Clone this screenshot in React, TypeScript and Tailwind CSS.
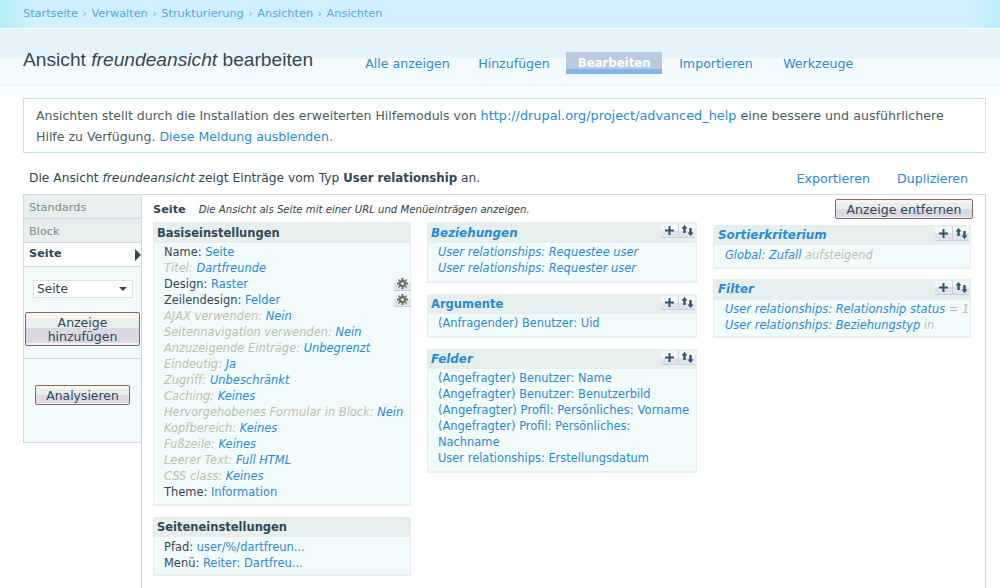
const F = "font-['DejaVu_Sans',sans-serif]";
const link = "text-[#2a8ad4]";
const toolBg = "bg-[linear-gradient(#f4f8f8_0%,#f4f8f8_50%,#dfe3ee_50%,#dfe3ee_100%)]";

function Plus() {
  return (
    <span className={`flex h-[14px] w-[17px] items-center justify-center border-b border-[#c5cfe6] ${toolBg}`}>
      <svg width="11" height="11" viewBox="0 0 11 11"><path d="M4.5 1h2v3.5H10v2H6.5V10h-2V6.5H1v-2h3.5z" fill="#2c5570" /></svg>
    </span>
  );
}
function Arrows() {
  return (
    <span className={`flex h-[14px] w-[17px] items-center justify-center border-b border-l border-[#c5cfe6] ${toolBg}`}>
      <svg width="13" height="11" viewBox="0 0 13 11"><path d="M3.5 0 6.5 3.5H4.7V8H2.3V3.5H0.5z" fill="#2c5570" /><path d="M9.5 11 6.5 7.5H8.3V3h2.4v4.5h1.8z" fill="#2c5570" /></svg>
    </span>
  );
}
function Gear() {
  return (
    <span className={`flex h-[14px] w-[17px] items-center justify-center border-b border-[#c5cfe6] ${toolBg}`}>
      <svg width="11" height="11" viewBox="0 0 11 11">
        <path d="M4.5 0h2v2l1.2.5L9.2 1l.9.9-1.5 1.5.4 1.1h2v2h-2l-.4 1.1 1.5 1.5-.9.9-1.5-1.5-1.2.5v2h-2v-2l-1.2-.5L1.8 10l-.9-.9 1.5-1.5L2 6.5H0v-2h2l.4-1.1L.9 1.9 1.8 1l1.5 1.5L4.5 2z" fill="#6b6a55" />
        <circle cx="5.5" cy="5.5" r="1.6" fill="#dfe3ee" />
      </svg>
    </span>
  );
}

function SectionHeader({ title, className, tools = true, tall }: { title: string; className: string; tools?: boolean; tall?: boolean }) {
  return (
    <div className={`flex items-start justify-between bg-[#e6efee] pl-[3px] ${tall ? "h-[21px]" : "h-[20px]"}`}>
      <span className={`font-bold leading-[21px] ${className}`}>{title}</span>
      {tools && (
        <span className="flex pr-[1px] pt-[2px]">
          <Plus />
          <Arrows />
        </span>
      )}
    </div>
  );
}

function Panel({ title, headClass, children, tall, body = "px-[10px] pb-[5px] pt-[1px]" }: { title: string; headClass: string; children: React.ReactNode; tall?: boolean; body?: string }) {
  return (
    <section className="border-x border-b-2 border-[#e8f0ef] bg-[#f2fbfb]">
      <SectionHeader title={title} className={headClass} tall={tall} />
      <div className={`text-[11.45px] leading-[16px] ${body}`}>{children}</div>
    </section>
  );
}

function Row({ label, value, faded, gear }: { label: string; value: string; faded?: boolean; gear?: boolean }) {
  return (
    <div className={`flex h-[16px] items-center justify-between whitespace-nowrap ${faded ? "italic" : ""}`}>
      <span>
        <span className={faded ? "text-[#b9bfae]" : "text-[#2f4757]"}>{label}: </span>
        <span className={link}>{value}</span>
      </span>
      {gear && <span className="-mr-[11px]"><Gear /></span>}
    </div>
  );
}

const striped = "bg-[linear-gradient(#fbf3e8_0%,#fbf3e8_18%,#e6efee_18%,#e6efee_48%,#dcd9e5_48%,#dcd9e5_94%,#f4f4f6_94%)]";

export default function App() {
  return (
    <div className={`${F} h-[588px] w-[1000px] overflow-hidden bg-white text-[#2f4757]`}>
      <header className="flex h-[28px] items-center bg-[linear-gradient(to_right,#b5eef6_0px,#d2effe_34px,#d2effe_970px,#bdeefc_1000px)] pl-[23px] text-[11.3px] text-[#56a5e0]">
        <span>Startseite</span><span className="mx-[4.5px] text-[#7ab0d0]">›</span>
        <span>Verwalten</span><span className="mx-[4.5px] text-[#7ab0d0]">›</span>
        <span>Strukturierung</span><span className="mx-[4.5px] text-[#7ab0d0]">›</span>
        <span>Ansichten</span><span className="mx-[4.5px] text-[#7ab0d0]">›</span>
        <span>Ansichten</span>
      </header>
      <div className="h-[1px] bg-white" />
      <div className="h-[57px] border-b border-[#e9eff2] bg-[linear-gradient(#e5f3fa_0%,#e5f3fa_51%,#f2fbfd_51%,#f2fbfd_100%)]">
        <div className="flex pl-[23px]">
          <h1 className="whitespace-nowrap pt-[19px] font-['Liberation_Sans',sans-serif] text-[19.2px] leading-[24px] text-[#33485a]">
            Ansicht <em>freundeansicht</em> bearbeiten
          </h1>
          <nav className={`ml-[52px] flex pt-[23px] text-[12.6px] leading-[24px] ${link}`}>
            <span className="w-[113px]">Alle anzeigen</span>
            <span className="w-[88px]">Hinzufügen</span>
            <span className="mr-[17px] h-[22px] w-[96px] border-b-[5px] border-[#83b5e4] bg-[#b8cbe2] text-center text-[11.7px] font-bold leading-[22px] text-white">Bearbeiten</span>
            <span className="w-[104px]">Importieren</span>
            <span>Werkzeuge</span>
          </nav>
        </div>
      </div>
      <div className="bg-[linear-gradient(#f7fcfe_0px,#f7fcfe_10px,#ffffff_10px)] pl-[23px] pt-[12px]">
        <div className="h-[55px] w-[963px] border border-[#bdeadb] bg-white px-[12px] pt-[6px] text-[12.52px] leading-[21px] text-[#4a5d5f]">
          <div className="whitespace-nowrap">Ansichten stellt durch die Installation des erweiterten Hilfemoduls von <span className={`text-[12.85px] ${link}`}>http://drupal.org/project/advanced_help</span> <span className="text-[12.66px]">eine bessere und ausführlichere</span></div>
          <div>Hilfe zu Verfügung. <span className={link}>Diese Meldung ausblenden.</span></div>
        </div>
      </div>
      <div className="flex h-[41px] w-[986px] items-center justify-between pl-[29px] pr-[18px] pt-[10px] text-[12.27px]">
        <span className="whitespace-nowrap">Die Ansicht <em>freundeansicht</em> zeigt Einträge vom Typ <strong className="text-[11.75px]">User relationship</strong> an.</span>
        <span className={`flex items-baseline gap-[27px] text-[12.7px] ${link}`}><span>Exportieren</span><span className="text-[12.55px]">Duplizieren</span></span>
      </div>
      <main className="ml-[23px] flex h-[400px] w-[963px] items-start border-r border-t border-[#d5d5e0]">
        <aside className="w-[118px] shrink-0 border-l border-[#d5d5e0] text-[11.3px]">
          <div className="h-[24px] border-b border-[#d5d5e0] bg-[#e6efee] pl-[5px] leading-[25px] text-[#7d8a85]">Standards</div>
          <div className="h-[24px] border-b border-[#d5d5e0] bg-[#e6efee] pl-[5px] leading-[25px] text-[#7d8a85]">Block</div>
          <div className="flex h-[24px] items-center justify-between border-b border-[#d5d5e0] bg-white pl-[5px] font-bold">
            <span>Seite</span>
            <svg width="6" height="12" viewBox="0 0 6 12"><path d="M0 0l6 6-6 6z" fill="#2f4757" /></svg>
          </div>
          <div className="h-[176px] border-b border-[#d5d5e0] bg-[#f2fbfb]">
            <div className="h-[92px] border-b border-[#d5d5e0] px-[1px] pt-[13px]">
              <div className="mx-[8px] flex h-[18px] w-[100px] items-center justify-between border border-[#dde3d5] bg-white pl-[3px] pr-[5px] text-[12.2px]">
                <span>Seite</span>
                <svg width="8" height="4" viewBox="0 0 8 4"><path d="M0 0h8L4 4z" fill="#34495a" /></svg>
              </div>
              <button className={`mt-[14px] block h-[34px] w-[115px] rounded-[2px] border border-[#7d6a70] ${striped} pt-[1px] text-center text-[12.5px] leading-[14px]`}>Anzeige<br />hinzufügen</button>
            </div>
            <button className={`ml-[11px] mt-[26px] block h-[20px] w-[95px] rounded-[2px] border border-[#7d6a70] ${striped} text-center text-[12.4px] leading-[17px]`}>Analysieren</button>
          </div>
        </aside>
        <div className="h-full min-w-0 flex-1 border-l border-[#d5d5e0] pl-[11px] pr-[14px]">
          <div className="flex h-[27px] items-start justify-between">
            <div className="flex items-baseline gap-[13px] whitespace-nowrap pt-[7px]">
              <strong className="text-[11.3px]">Seite</strong>
              <em className="text-[10.15px] text-[#33424d]">Die Ansicht als Seite mit einer URL und Menüeinträgen anzeigen.</em>
            </div>
            <button className={`-mr-[2px] mt-[4px] h-[20px] w-[138px] shrink-0 rounded-[2px] border border-[#7d6a70] ${striped} text-[12.5px] leading-[17px]`}>Anzeige entfernen</button>
          </div>
          <div className="flex items-start gap-[16px]">
            <div className="flex w-[258px] shrink-0 flex-col gap-[11px]">
              <section className="border-x border-b-2 border-[#e8f0ef] bg-[#f2fbfb]">
                <SectionHeader title="Basiseinstellungen" className="text-[11.5px] leading-[23px] text-[#2f4757]" tools={false} tall />
                <div className="px-[10px] pb-[4px] pt-[1px] text-[11.45px] leading-[16px]">
                  <Row label="Name" value="Seite" />
                  <Row label="Titel" value="Dartfreunde" faded />
                  <Row label="Design" value="Raster" gear />
                  <Row label="Zeilendesign" value="Felder" gear />
                  <Row label="AJAX verwenden" value="Nein" faded />
                  <Row label="Seitennavigation verwenden" value="Nein" faded />
                  <Row label="Anzuzeigende Einträge" value="Unbegrenzt" faded />
                  <Row label="Eindeutig" value="Ja" faded />
                  <Row label="Zugriff" value="Unbeschränkt" faded />
                  <Row label="Caching" value="Keines" faded />
                  <Row label="Hervorgehobenes Formular in Block" value="Nein" faded />
                  <Row label="Kopfbereich" value="Keines" faded />
                  <Row label="Fußzeile" value="Keines" faded />
                  <Row label="Leerer Text" value="Full HTML" faded />
                  <Row label="CSS class" value="Keines" faded />
                  <Row label="Theme" value="Information" />
                </div>
              </section>
              <section className="border-x border-b-2 border-[#e8f0ef] bg-[#f2fbfb]">
                <SectionHeader title="Seiteneinstellungen" className="text-[11.5px] leading-[21px] text-[#2f4757]" tools={false} />
                <div className="px-[10px] pb-[3px] pt-[2px] text-[11.45px] leading-[16px]">
                  <Row label="Pfad" value="user/%/dartfreun..." />
                  <Row label="Menü" value="Reiter: Dartfreu..." />
                </div>
              </section>
            </div>
            <div className="flex w-[270px] shrink-0 flex-col gap-[11px]">
              <Panel title="Beziehungen" headClass={`text-[11.9px] leading-[22px] italic ${link}`} tall>
                <div className={`italic ${link}`}>User relationships: Requestee user</div>
                <div className={`italic ${link}`}>User relationships: Requester user</div>
              </Panel>
              <Panel title="Argumente" headClass={`text-[11.5px] ${link}`}>
                <div className={link}>(Anfragender) Benutzer: Uid</div>
              </Panel>
              <Panel title="Felder" headClass={`text-[11.9px] italic ${link}`}>
                <div className={link}>(Angefragter) Benutzer: Name</div>
                <div className={link}>(Angefragter) Benutzer: Benutzerbild</div>
                <div className={`whitespace-nowrap text-[11.65px] ${link}`}>(Angefragter) Profil: Persönliches: Vorname</div>
                <div className={link}>(Angefragter) Profil: Persönliches:<br />Nachname</div>
                <div className={link}>User relationships: Erstellungsdatum</div>
              </Panel>
            </div>
            <div className="flex w-[258px] shrink-0 flex-col gap-[10px] pt-[3px]">
              <Panel title="Sortierkriterium" headClass={`ml-[1px] text-[11.9px] italic ${link}`} body="pb-[4px] pl-[11px] pr-[10px] pt-[2px]">
                <div className="italic"><span className={link}>Global: Zufall</span> <span className="text-[#b9bfae]">aufsteigend</span></div>
              </Panel>
              <Panel title="Filter" headClass={`ml-[1px] text-[11.9px] italic ${link}`} tall body="pb-[3px] pl-[11px] pr-[10px] pt-[1px]">
                <div className="whitespace-nowrap italic"><span className={link}>User relationships: Relationship status</span> <span className="text-[#b9bfae]">= 1</span></div>
                <div className="whitespace-nowrap italic"><span className={link}>User relationships: Beziehungstyp</span> <span className="text-[#b9bfae]">in</span></div>
              </Panel>
            </div>
          </div>
        </div>
      </main>
    </div>
  );
}
